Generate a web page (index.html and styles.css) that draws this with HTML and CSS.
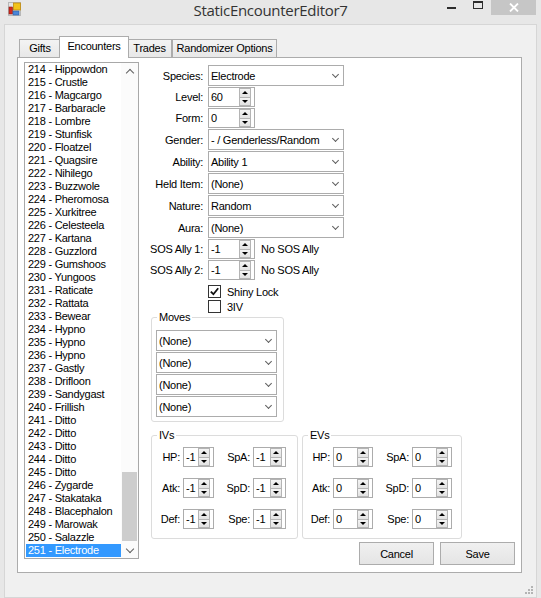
FILE: index.html
```html
<!DOCTYPE html>
<html>
<head>
<meta charset="utf-8">
<title>StaticEncounterEditor7</title>
<link rel="stylesheet" href="styles.css">
</head>
<body>
<div class="window">
  <div class="titlebar">
    <div class="tb-left">
      <svg class="app-icon" width="13" height="14" viewBox="0 0 13 14">
        <rect x="0.5" y="0.5" width="12" height="13" fill="#e4e4e4" stroke="#b8b8b8"/>
        <rect x="5.5" y="1" width="7" height="7" fill="#f2c31b" stroke="#c08a10" stroke-width="0.8"/>
        <rect x="1" y="5" width="3.5" height="7" fill="#d42a1e" stroke="#8a1a12" stroke-width="0.6"/>
        <rect x="5" y="9" width="6" height="4" fill="#4a86d8" stroke="#2a5aa8" stroke-width="0.6"/>
      </svg>
    </div>
    <div class="title">StaticEncounterEditor7</div>
    <div class="tb-right">
      <span class="btn-min"></span>
      <span class="btn-max"></span>
      <span class="btn-close">
        <svg width="10" height="9" viewBox="0 0 10 9"><path d="M1 0.5 L9 8.5 M9 0.5 L1 8.5" stroke="#fff" stroke-width="1.8" fill="none"/></svg>
      </span>
    </div>
  </div>
  <div class="client">
    <div class="tabctl">
      <div class="tabs">
        <div class="tab t-gifts">Gifts</div>
        <div class="tab sel t-enc">Encounters</div>
        <div class="tab t-trades">Trades</div>
        <div class="tab t-rand">Randomizer Options</div>
      </div>
      <div class="panel">
        <div class="listbox">
          <ul class="items">
            <li>214 - Hippowdon</li>
            <li>215 - Crustle</li>
            <li>216 - Magcargo</li>
            <li>217 - Barbaracle</li>
            <li>218 - Lombre</li>
            <li>219 - Stunfisk</li>
            <li>220 - Floatzel</li>
            <li>221 - Quagsire</li>
            <li>222 - Nihilego</li>
            <li>223 - Buzzwole</li>
            <li>224 - Pheromosa</li>
            <li>225 - Xurkitree</li>
            <li>226 - Celesteela</li>
            <li>227 - Kartana</li>
            <li>228 - Guzzlord</li>
            <li>229 - Gumshoos</li>
            <li>230 - Yungoos</li>
            <li>231 - Raticate</li>
            <li>232 - Rattata</li>
            <li>233 - Bewear</li>
            <li>234 - Hypno</li>
            <li>235 - Hypno</li>
            <li>236 - Hypno</li>
            <li>237 - Gastly</li>
            <li>238 - Drifloon</li>
            <li>239 - Sandygast</li>
            <li>240 - Frillish</li>
            <li>241 - Ditto</li>
            <li>242 - Ditto</li>
            <li>243 - Ditto</li>
            <li>244 - Ditto</li>
            <li>245 - Ditto</li>
            <li>246 - Zygarde</li>
            <li>247 - Stakataka</li>
            <li>248 - Blacephalon</li>
            <li>249 - Marowak</li>
            <li>250 - Salazzle</li>
            <li class="selected">251 - Electrode</li>
          </ul>
          <div class="vscroll">
            <div class="sb-btn sb-up"></div>
            <div class="track"><div class="thumb"></div></div>
            <div class="sb-btn sb-down"></div>
          </div>
        </div>

        <div class="editor">
          <div class="form">
            <label class="lbl">Species:</label>
            <div class="combo w-main"><span>Electrode</span></div>

            <label class="lbl">Level:</label>
            <div class="spin w-spin"><span class="val">60</span><span class="spin-btns"><i class="up"></i><i class="dn"></i></span></div>

            <label class="lbl">Form:</label>
            <div class="spin w-spin"><span class="val">0</span><span class="spin-btns"><i class="up"></i><i class="dn"></i></span></div>

            <label class="lbl">Gender:</label>
            <div class="combo w-main"><span>- / Genderless/Random</span></div>

            <label class="lbl">Ability:</label>
            <div class="combo w-main"><span>Ability 1</span></div>

            <label class="lbl">Held Item:</label>
            <div class="combo w-main"><span>(None)</span></div>

            <label class="lbl">Nature:</label>
            <div class="combo w-main"><span>Random</span></div>

            <label class="lbl">Aura:</label>
            <div class="combo w-main"><span>(None)</span></div>

            <label class="lbl">SOS Ally 1:</label>
            <div class="field-row">
              <div class="spin w-spin"><span class="val">-1</span><span class="spin-btns"><i class="up"></i><i class="dn"></i></span></div>
              <span class="note">No SOS Ally</span>
            </div>

            <label class="lbl">SOS Ally 2:</label>
            <div class="field-row">
              <div class="spin w-spin"><span class="val">-1</span><span class="spin-btns"><i class="up"></i><i class="dn"></i></span></div>
              <span class="note">No SOS Ally</span>
            </div>
          </div>

          <div class="checks">
            <div class="check-row">
              <span class="cb checked"><svg width="9" height="9" viewBox="0 0 9 9"><polyline points="0.8,4.6 3.4,7.2 8.2,1.2" fill="none" stroke="#111" stroke-width="1.8"/></svg></span>
              <span>Shiny Lock</span>
            </div>
            <div class="check-row">
              <span class="cb"></span>
              <span>3IV</span>
            </div>
          </div>

          <fieldset class="group moves">
            <legend>Moves</legend>
            <div class="move-list">
              <div class="combo w-move"><span>(None)</span></div>
              <div class="combo w-move"><span>(None)</span></div>
              <div class="combo w-move"><span>(None)</span></div>
              <div class="combo w-move"><span>(None)</span></div>
            </div>
          </fieldset>

          <div class="stats">
            <fieldset class="group ivs">
              <legend>IVs</legend>
              <div class="stat-grid iv-grid">
                <label class="lbl">HP:</label>
                <div class="spin"><span class="val">-1</span><span class="spin-btns"><i class="up"></i><i class="dn"></i></span></div>
                <label class="lbl">SpA:</label>
                <div class="spin"><span class="val">-1</span><span class="spin-btns"><i class="up"></i><i class="dn"></i></span></div>

                <label class="lbl">Atk:</label>
                <div class="spin"><span class="val">-1</span><span class="spin-btns"><i class="up"></i><i class="dn"></i></span></div>
                <label class="lbl">SpD:</label>
                <div class="spin"><span class="val">-1</span><span class="spin-btns"><i class="up"></i><i class="dn"></i></span></div>

                <label class="lbl">Def:</label>
                <div class="spin"><span class="val">-1</span><span class="spin-btns"><i class="up"></i><i class="dn"></i></span></div>
                <label class="lbl">Spe:</label>
                <div class="spin"><span class="val">-1</span><span class="spin-btns"><i class="up"></i><i class="dn"></i></span></div>
              </div>
            </fieldset>

            <fieldset class="group evs">
              <legend>EVs</legend>
              <div class="stat-grid ev-grid">
                <label class="lbl">HP:</label>
                <div class="spin"><span class="val">0</span><span class="spin-btns"><i class="up"></i><i class="dn"></i></span></div>
                <label class="lbl">SpA:</label>
                <div class="spin"><span class="val">0</span><span class="spin-btns"><i class="up"></i><i class="dn"></i></span></div>

                <label class="lbl">Atk:</label>
                <div class="spin"><span class="val">0</span><span class="spin-btns"><i class="up"></i><i class="dn"></i></span></div>
                <label class="lbl">SpD:</label>
                <div class="spin"><span class="val">0</span><span class="spin-btns"><i class="up"></i><i class="dn"></i></span></div>

                <label class="lbl">Def:</label>
                <div class="spin"><span class="val">0</span><span class="spin-btns"><i class="up"></i><i class="dn"></i></span></div>
                <label class="lbl">Spe:</label>
                <div class="spin"><span class="val">0</span><span class="spin-btns"><i class="up"></i><i class="dn"></i></span></div>
              </div>
            </fieldset>
          </div>

          <div class="actions">
            <button class="btn">Cancel</button>
            <button class="btn">Save</button>
          </div>
        </div>
      </div>
    </div>
    <div class="grip">
      <svg width="9" height="9" viewBox="0 0 9 9" fill="#b4b4b4">
        <rect x="6" y="0" width="2" height="2"/>
        <rect x="3" y="3" width="2" height="2"/><rect x="6" y="3" width="2" height="2"/>
        <rect x="0" y="6" width="2" height="2"/><rect x="3" y="6" width="2" height="2"/><rect x="6" y="6" width="2" height="2"/>
      </svg>
    </div>
  </div>
</div>
</body>
</html>
```

FILE: styles.css
```css
* { box-sizing: border-box; }

html, body {
  margin: 0;
  padding: 0;
}

body {
  width: 541px;
  height: 598px;
  overflow: hidden;
  background: #e7e7e7;
  font-family: "Liberation Sans", Arial, sans-serif;
  font-size: 11px;
  letter-spacing: -0.25px;
  color: #000;
}

.window {
  width: 541px;
  height: 598px;
  background: #e7e7e7;
}

/* ---------- title bar ---------- */
.titlebar {
  display: flex;
  height: 24px;
}

.tb-left {
  width: 100px;
  padding: 2px 0 0 8px;
}

.app-icon { display: block; }

.title {
  flex: 1;
  text-align: center;
  font-family: "Open Sans", "Noto Sans", sans-serif;
  font-size: 15px;
  letter-spacing: -0.3px;
  line-height: 20px;
  color: #333;
}

.tb-right {
  width: 100px;
  display: flex;
  align-items: flex-start;
}

.btn-min {
  width: 9px;
  height: 2px;
  margin: 7px 0 0 6px;
  background: #2d2d2d;
}

.btn-max {
  width: 10px;
  height: 8px;
  margin: 1px 0 0 17px;
  border: 1px solid #2d2d2d;
  border-top-width: 2px;
}

.btn-close {
  width: 45px;
  height: 15px;
  margin-left: 8px;
  background: #c6c6c6;
  display: flex;
  align-items: center;
  justify-content: center;
}

/* ---------- client ---------- */
.client {
  margin-left: 4px;
  width: 533px;
  height: 574px;
  border: 1px solid #d6d6d6;
  background: #f0f0f0;
  padding: 11px 0 0 12px;
  display: flex;
  flex-direction: column;
}

.tabctl {
  width: 505px;
}

.tabs {
  display: flex;
  align-items: flex-end;
  height: 21px;
  padding-left: 2px;
}

.tab {
  height: 18px;
  line-height: 17px;
  text-align: center;
  border: 1px solid #acacac;
  border-bottom: 0;
  background: linear-gradient(#f3f3f3, #e8e8e8);
  white-space: nowrap;
}

.tab.sel {
  position: relative;
  z-index: 1;
  height: 22px;
  line-height: 18px;
  margin: 0 -2px -1px -2px;
  background: #fff;
}

.t-gifts { width: 42px; }
.t-enc { width: 70px; }
.t-trades { width: 45px; }
.t-rand { width: 105px; }

.panel {
  width: 505px;
  height: 516px;
  border: 1px solid #acacac;
  background: #fff;
  display: flex;
  align-items: flex-start;
}

/* ---------- list box ---------- */
.listbox {
  margin: 4px 0 0 6px;
  width: 115px;
  height: 497px;
  border: 1px solid #a8a8a8;
  display: flex;
}

.items {
  flex: 1;
  margin: 0;
  padding: 0 0 0 1px;
  list-style: none;
  overflow: hidden;
}

.items li {
  height: 13px;
  line-height: 13px;
  padding-left: 2px;
  white-space: nowrap;
}

.items li.selected {
  background: #3399ff;
  color: #fff;
}

.vscroll {
  width: 17px;
  display: flex;
  flex-direction: column;
  background: #fbfbfb;
}

.sb-btn {
  height: 17px;
  display: flex;
  align-items: center;
  justify-content: center;
}

.sb-btn::after {
  content: "";
  width: 5px;
  height: 5px;
  border-left: 1.6px solid #606060;
  border-top: 1.6px solid #606060;
}

.sb-up::after { transform: translateY(1px) rotate(45deg); }
.sb-down::after { transform: translateY(-1px) rotate(225deg); }

.track {
  flex: 1;
  display: flex;
  flex-direction: column;
  justify-content: flex-end;
}

.thumb {
  height: 69px;
  margin: 0 1px;
  background: #cdcdcd;
}

/* ---------- editor ---------- */
.editor {
  flex: 1;
  padding-top: 7px;
  display: flex;
  flex-direction: column;
}

.form {
  margin-left: 8px;
  display: grid;
  grid-template-columns: 56px auto;
  column-gap: 5px;
  row-gap: 1px;
  justify-items: start;
}

.lbl {
  justify-self: end;
  align-self: center;
  white-space: nowrap;
}

.combo {
  height: 21px;
  border: 1px solid #acacac;
  background: #fff;
  display: flex;
  align-items: center;
  justify-content: space-between;
  padding: 0 5px 0 2px;
  white-space: nowrap;
}

.combo::after {
  content: "";
  flex: none;
  width: 4px;
  height: 4px;
  border-right: 1.5px solid #5e5e5e;
  border-bottom: 1.5px solid #5e5e5e;
  transform: translateY(-1px) rotate(45deg);
}

.w-main { width: 136px; }
.w-move { width: 121px; }
.w-spin { width: 47px; }

.spin {
  height: 20px;
  border: 1px solid #acacac;
  background: #fff;
  display: flex;
}

.spin .val {
  flex: 1;
  padding-left: 2px;
  line-height: 18px;
}

.spin-btns {
  width: 12px;
  margin-right: 3px;
  display: flex;
  flex-direction: column;
}

.spin-btns i {
  flex: 1;
  border: 1px solid #b4b4b4;
  background: linear-gradient(#f4f4f4, #e2e2e2);
  display: flex;
  align-items: center;
  justify-content: center;
}

.spin-btns i + i { border-top: 0; }

.spin-btns i::after {
  content: "";
  border-left: 3px solid transparent;
  border-right: 3px solid transparent;
}

.spin-btns .up::after { border-bottom: 3px solid #000; }
.spin-btns .dn::after { border-top: 3px solid #000; }

.field-row {
  display: flex;
  align-items: center;
  gap: 6px;
}

/* ---------- check boxes ---------- */
.checks {
  margin: 4px 0 0 69px;
}

.check-row {
  height: 15px;
  display: flex;
  align-items: center;
  gap: 6px;
}

.cb {
  width: 13px;
  height: 13px;
  border: 1px solid #333;
  background: #fff;
  display: flex;
  align-items: center;
  justify-content: center;
}

/* ---------- group boxes ---------- */
.group {
  margin: 0;
  border: 1px solid #dcdcdc;
  border-radius: 3px;
  min-width: 0;
}

.group legend {
  margin-left: 1px;
  padding: 0 2px;
  line-height: 13px;
}

.moves {
  width: 133px;
  margin: -3px 0 0 12px;
  padding: 6px 0 4px 4px;
}

.move-list {
  display: flex;
  flex-direction: column;
  gap: 1px;
}

.stats {
  display: flex;
  gap: 4px;
  margin: 7px 0 0 12px;
}

.ivs { width: 147px; padding: 5px 0 9px 4px; }
.evs { width: 160px; padding: 5px 0 9px 4px; }

.stat-grid {
  display: grid;
  column-gap: 3px;
  row-gap: 11px;
  grid-auto-rows: 20px;
}

.iv-grid { grid-template-columns: 24px 31px 33px 33px; }
.ev-grid { grid-template-columns: 23px 40px 33px 40px; }

/* ---------- buttons ---------- */
.actions {
  display: flex;
  justify-content: flex-end;
  gap: 6px;
  margin-top: 3px;
  padding-right: 6px;
}

.btn {
  width: 75px;
  height: 23px;
  border: 1px solid #acacac;
  background: linear-gradient(#f0f0f0, #e5e5e5);
  font-family: inherit;
  font-size: 11px;
  letter-spacing: -0.25px;
  color: #000;
  padding: 0;
}

.grip {
  align-self: flex-end;
  margin: 13px 2px 0 0;
  height: 9px;
  line-height: 0;
}
```
